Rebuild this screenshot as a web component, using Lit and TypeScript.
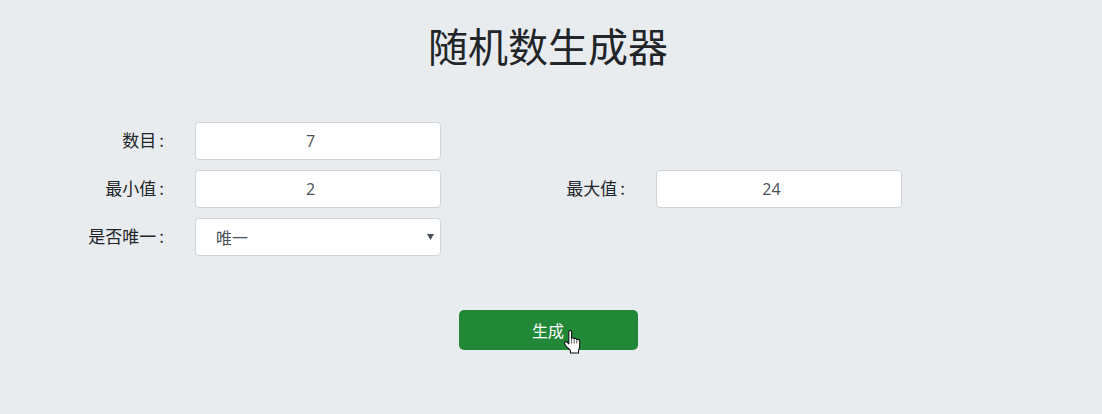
import { LitElement, html, css } from "lit";
import { customElement } from "lit/decorators.js";

@customElement("app-root")
export class AppRoot extends LitElement {
  static styles = css`
    :host {
      display: block;
      width: 1102px;
      height: 414px;
      background: #e9ecef;
      color: #212529;
      font-family: "Open Sans", "Noto Sans CJK SC", sans-serif;
      overflow: hidden;
    }
    h1 {
      margin: 0;
      padding: 15px 6px 0 0;
      height: 122px;
      box-sizing: border-box;
      text-align: center;
      font-size: 40px;
      line-height: 60px;
      font-weight: 400;
      font-family: "Noto Sans CJK SC", sans-serif;
    }
    .form {
      display: grid;
      grid-template-columns: 166px 246px 157px 246px;
      column-gap: 29px;
      row-gap: 10px;
      grid-auto-rows: 38px;
    }
    label {
      text-align: right;
      font-size: 17px;
      line-height: 36px;
      padding-right: 2px;
      font-family: "Noto Sans CJK SC", sans-serif;
      white-space: nowrap;
    }
    .colon {
      margin-left: 3px;
    }
    input,
    select {
      width: 100%;
      height: 38px;
      box-sizing: border-box;
      margin: 0;
      background: #fff;
      border: 1px solid #ced4da;
      border-radius: 4px;
      color: #495057;
      font-size: 16px;
      font-family: "Open Sans", "Noto Sans CJK SC", sans-serif;
      outline: none;
    }
    input {
      text-align: center;
      padding: 0 27px 0 12px;
    }
    select {
      appearance: none;
      padding: 0 12px 0 20px;
      font-family: "Noto Sans CJK SC", sans-serif;
    }
    .sel {
      position: relative;
    }
    .sel svg {
      position: absolute;
      right: 7px;
      top: 15px;
      width: 7px;
      height: 7px;
      pointer-events: none;
    }
    .spacer {
      grid-column: span 2;
    }
    .actions {
      display: flex;
      justify-content: center;
      padding: 54px 6px 0 0;
    }
    button {
      position: relative;
      width: 179px;
      height: 40px;
      border: 0;
      border-radius: 5px;
      background: #218838;
      color: #fff;
      font-size: 16px;
      font-family: "Noto Sans CJK SC", sans-serif;
      padding: 0;
    }
    .hand {
      position: absolute;
      left: 105px;
      top: 20px;
      width: 17px;
      height: 24px;
    }
  `;

  private lab(text: string) {
    return html`<label>${text}<span class="colon">:</span></label>`;
  }

  render() {
    return html`
      <h1>随机数生成器</h1>
      <div class="form">
        ${this.lab("数目")}
        <input value="7" />
        <div class="spacer"></div>
        ${this.lab("最小值")}
        <input value="2" />
        ${this.lab("最大值")}
        <input value="24" />
        ${this.lab("是否唯一")}
        <div class="sel">
          <select><option>唯一</option><option>不唯一</option></select>
          <svg viewBox="0 0 7 7"><polygon points="0,1 7,1 3.500,7" fill="#495057" /></svg>
        </div>
      </div>
      <div class="actions">
        <button>
          生成
          <svg class="hand" viewBox="0 0 17 24">
            <path
              d="M4.800 2C4.800 0 7.600 0 7.600 2V8.500C8.200 7.500 10 7.500 10.200 9C10.800 8 12.600 8.300 12.800 9.800C13.500 9 15.500 9.400 15.700 11V16C15.700 18 15 19.500 14.500 20.500V23H6.500V21C5.500 19 3.500 18 2 16L.8 14C0 12.500 1.500 11 3 12L4.800 13.800Z"
              fill="#fff"
              stroke="#111"
              stroke-width="1.100"
              stroke-linejoin="round"
            />
            <path d="M7.600 9V13.500M10.200 9.500V13.500M12.800 10.300V13.500" stroke="#333" stroke-width=".8" fill="none" />
          </svg>
        </button>
      </div>
    `;
  }
}
